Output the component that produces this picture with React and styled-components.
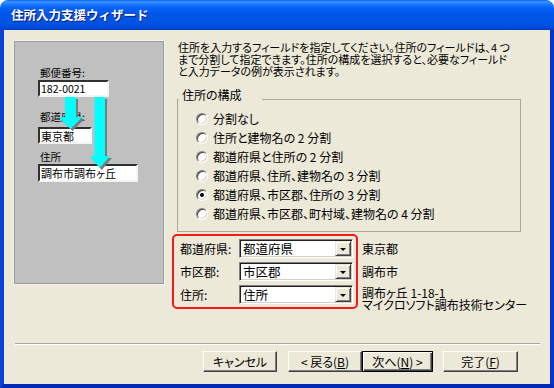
import React from 'react';
import styled, { createGlobalStyle } from 'styled-components';

const GlobalStyle = createGlobalStyle`
  html, body { margin: 0; padding: 0; background: #fff; }
  body { font-family: "Noto Sans CJK JP", "Noto Sans", sans-serif; }
  #root { width: 554px; height: 388px; }
`;

const Window = styled.div`
  width: 554px;
  height: 388px;
  display: flex;
  flex-direction: column;
`;

const TitleBar = styled.div`
  flex: none;
  height: 30px;
  box-sizing: border-box;
  border-radius: 8px 8px 0 0;
  background: linear-gradient(180deg, #0A61F0 0px, #3D95FF 2px, #1C79FC 4px, #0661F6 8px, #0056E9 14px, #0054E3 22px, #0050E0 26px, #0143CF 29px, #003DC5 30px);
  display: flex;
  align-items: center;
  padding: 0 0 1px 11px;
  color: #fff;
  font-weight: bold;
  font-size: 12.5px;
  text-shadow: 1px 1px 0 #0F1D7A;
`;

const Frame = styled.div`
  flex: 1;
  display: flex;
  flex-direction: column;
  border-style: solid;
  border-width: 0 4px 4px 4px;
  border-color: #0842D6 #0831C9 #0029B5 #0842D6;
  background: #ECE9D8;
  font-size: 12px;
  color: #000;
  font-feature-settings: "palt";
`;

const Main = styled.div`
  flex: 1;
  display: flex;
  align-items: flex-start;
  padding: 10px 0 0 9px;
`;

const Panel = styled.div`
  position: relative;
  flex: none;
  width: 152px;
  height: 245px;
  box-sizing: border-box;
  border: 1px solid #F4F3EE;
  box-shadow: inset 1px 1px 0 #9A9A9A, inset -1px -1px 0 #9A9A9A;
  background: #C0C0C0;
  padding: 26px 0 0 24px;
  display: flex;
  flex-direction: column;
  align-items: flex-start;
`;

const PanelLabel = styled.div`
  font-size: 10.5px;
  line-height: 12px;
  height: 12px;
  margin: ${p => p.$top}px 0 0 2px;
`;

const PanelBox = styled.div`
  width: ${p => p.$w}px;
  height: ${p => p.$h}px;
  margin-top: ${p => p.$top}px;
  box-sizing: border-box;
  border: 2px solid;
  border-color: #303030 #F4F4F4 #F4F4F4 #303030;
  background: #fff;
  font-size: ${p => p.$fs}px;
  display: flex;
  align-items: center;
  padding-left: 1px;
  white-space: nowrap;
`;

const ArrowLayer = styled.svg`
  position: absolute;
  left: 0;
  top: 0;
  width: 150px;
  height: 243px;
  pointer-events: none;
`;

const RightColumn = styled.div`
  flex: 1;
  margin-left: 7px;
  display: flex;
  flex-direction: column;
  align-items: flex-start;
`;

const Intro = styled.div`
  margin: 1px 0 0 6px;
  font-size: 11px;
  line-height: 12px;
  white-space: nowrap;
`;

const Group = styled.fieldset`
  margin: 12px 0 0 5px;
  width: 344px;
  box-sizing: border-box;
  border: 1px solid #ACA899;
  padding: 0 0 8px 0;
  min-width: 0;
`;

const GroupLegend = styled.legend`
  margin-left: 1px;
  padding: 0 20px 8px 3px;
  line-height: 12px;
`;

const RadioRow = styled.label`
  height: 19px;
  display: flex;
  align-items: center;
  gap: 5px;
  padding-left: 18px;
  white-space: nowrap;
`;

const RadioDot = styled.span`
  position: relative;
  flex: none;
  width: 12px;
  height: 12px;
  box-sizing: border-box;
  border-radius: 50%;
  border: 1px solid;
  border-color: #808080 #FFFFFF #FFFFFF #808080;
  background: #fff;
  box-shadow: inset 1px 1px 0 #404040, inset -1px -1px 0 #D4D0C8;
  &::after {
    content: "";
    display: ${p => (p.$on ? 'block' : 'none')};
    position: absolute;
    left: 3px;
    top: 3px;
    width: 4px;
    height: 4px;
    border-radius: 50%;
    background: #000;
  }
`;

const FieldsArea = styled.div`
  display: flex;
  align-items: flex-start;
  margin-top: 2px;
`;

const RedBox = styled.div`
  display: grid;
  grid-template-columns: 59px 114px;
  grid-auto-rows: 19px;
  row-gap: 4px;
  align-items: center;
  border: 2px solid #F41A1A;
  border-radius: 5px;
  padding: 3px 3px 3px 6px;
`;

const FieldLabel = styled.span`
  white-space: nowrap;
`;

const Combo = styled.div`
  height: 19px;
  box-sizing: border-box;
  border: 1px solid;
  border-color: #808080 #FFFFFF #FFFFFF #808080;
  box-shadow: inset 1px 1px 0 #202020, inset -1px -1px 0 #D4D0C8;
  background: #fff;
  padding: 1px;
  display: flex;
  align-items: stretch;
`;

const ComboText = styled.span`
  flex: 1;
  padding-left: 2px;
  font-size: 12.5px;
  line-height: 15px;
  white-space: nowrap;
`;

const DropButton = styled.span`
  flex: none;
  width: 16px;
  box-sizing: border-box;
  background: #ECE9D8;
  border: 1px solid;
  border-color: #ECE9D8 #404040 #404040 #ECE9D8;
  box-shadow: inset 1px 1px 0 #fff, inset -1px -1px 0 #808080;
  display: flex;
  align-items: center;
  justify-content: center;
  &::after {
    content: "";
    width: 0;
    height: 0;
    border-left: 3px solid transparent;
    border-right: 3px solid transparent;
    border-top: 3px solid #000;
    margin-top: 1px;
  }
`;

const Examples = styled.div`
  display: grid;
  grid-template-rows: 19px 19px auto;
  row-gap: 4px;
  padding-top: 5px;
  margin-left: 4px;
`;

const Example = styled.div`
  white-space: nowrap;
  display: flex;
  flex-direction: column;
  justify-content: ${p => (p.$multi ? 'flex-start' : 'center')};
  padding-top: ${p => (p.$multi ? 2 : 0)}px;
  line-height: 12px;
`;

const Separator = styled.div`
  height: 0;
  border-top: 1px solid #ACA899;
  border-bottom: 1px solid #FFFFFF;
  margin: 0 10px 0 11px;
`;

const Footer = styled.div`
  display: flex;
  justify-content: flex-end;
  padding: 6px 32px 12px 0;
`;

const Button = styled.button`
  width: ${p => p.$w}px;
  height: 21px;
  margin-left: ${p => p.$ml || 0}px;
  box-sizing: border-box;
  padding: 0;
  font-family: inherit;
  font-size: 12px;
  font-feature-settings: "palt";
  color: #000;
  background: #ECE9D8;
  border: 1px solid;
  border-color: ${p => (p.$default ? '#000' : '#fff #404040 #404040 #fff')};
  box-shadow: ${p =>
    p.$default
      ? 'inset 1px 1px 0 #fff, inset -1px -1px 0 #404040, inset -2px -2px 0 #808080'
      : 'inset -1px -1px 0 #808080'};
  display: flex;
  align-items: center;
  justify-content: center;
  white-space: nowrap;
`;

const options = [
  '分割なし',
  '住所と建物名の 2 分割',
  '都道府県と住所の 2 分割',
  '都道府県、住所、建物名の 3 分割',
  '都道府県、市区郡、住所の 3 分割',
  '都道府県、市区郡、町村域、建物名の 4 分割',
];

const fields = [
  { label: '都道府県:', value: '都道府県' },
  { label: '市区郡:', value: '市区郡' },
  { label: '住所:', value: '住所' },
];

function Arrows() {
  const a1 = '51,56 62,56 62,76 68.5,76 56.5,88 44.5,76 51,76';
  const a2 = '80.5,56 91,56 91,115 96,115 85.75,127 75.5,115 80.5,115';
  return (
    <ArrowLayer viewBox="0 0 150 243">
      <polygon points={a1} fill="#7A7A7A" transform="translate(2 2)" />
      <polygon points={a2} fill="#7A7A7A" transform="translate(2 2)" />
      <polygon points={a1} fill="#00FFFF" />
      <polygon points={a2} fill="#00FFFF" />
    </ArrowLayer>
  );
}

export default function App() {
  return (
    <>
      <GlobalStyle />
      <Window>
        <TitleBar>住所入力支援ウィザード</TitleBar>
        <Frame>
          <Main>
            <Panel>
              <PanelLabel $top={0}>郵便番号:</PanelLabel>
              <PanelBox $w={71} $h={17} $top={1} $fs={10.5}>182-0021</PanelBox>
              <PanelLabel $top={14}>都道府県:</PanelLabel>
              <PanelBox $w={54} $h={17} $top={4} $fs={11}>東京都</PanelBox>
              <PanelLabel $top={7}>住所</PanelLabel>
              <PanelBox $w={100} $h={18} $top={1} $fs={11}>調布市調布ヶ丘</PanelBox>
              <Arrows />
            </Panel>
            <RightColumn>
              <Intro>
                住所を入力するフィールドを指定してください。住所のフィールドは、4 つ<br />
                まで分割して指定できます。住所の構成を選択すると、必要なフィールド<br />
                と入力データの例が表示されます。
              </Intro>
              <Group>
                <GroupLegend>住所の構成</GroupLegend>
                {options.map((o, i) => (
                  <RadioRow key={o}>
                    <RadioDot $on={i === 4} />
                    {o}
                  </RadioRow>
                ))}
              </Group>
              <FieldsArea>
                <RedBox>
                  {fields.map(f => (
                    <React.Fragment key={f.label}>
                      <FieldLabel>{f.label}</FieldLabel>
                      <Combo>
                        <ComboText>{f.value}</ComboText>
                        <DropButton />
                      </Combo>
                    </React.Fragment>
                  ))}
                </RedBox>
                <Examples>
                  <Example>東京都</Example>
                  <Example>調布市</Example>
                  <Example $multi>
                    <span>調布ヶ丘 1-18-1</span>
                    <span>マイクロソフト調布技術センター</span>
                  </Example>
                </Examples>
              </FieldsArea>
            </RightColumn>
          </Main>
          <Separator />
          <Footer>
            <Button $w={74}>キャンセル</Button>
            <Button $w={74} $ml={11}>&lt; 戻る(<u>B</u>)</Button>
            <Button $w={71} $default>次へ(<u>N</u>) &gt;</Button>
            <Button $w={75} $ml={10}>完了(<u>F</u>)</Button>
          </Footer>
        </Frame>
      </Window>
    </>
  );
}
